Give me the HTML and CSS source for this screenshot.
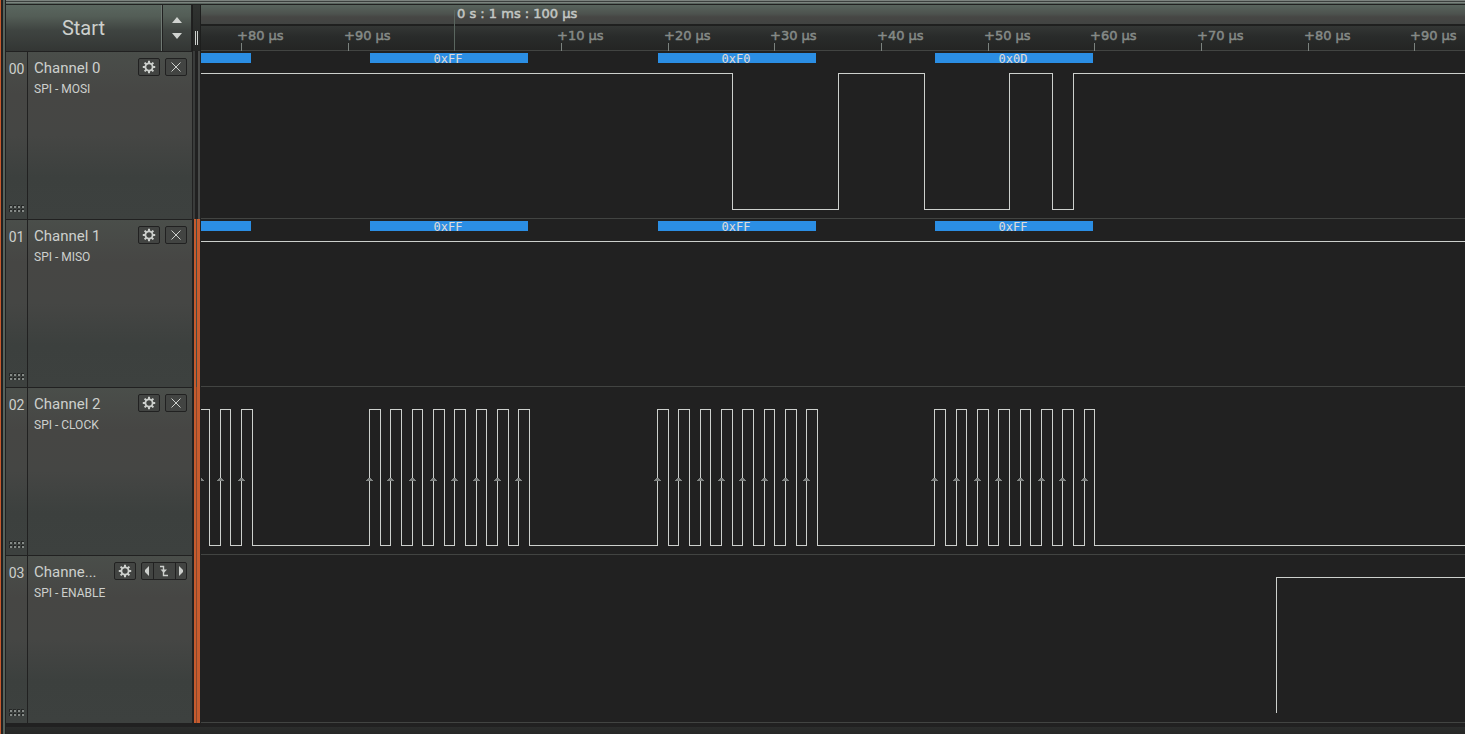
FILE: index.html
```html
<!DOCTYPE html>
<html lang="en">
<head>
<meta charset="utf-8">
<title>Logic Analyzer</title>
<link rel="stylesheet" href="styles.css">
</head>
<body>
<svg class="defs" aria-hidden="true">
  <symbol id="gear" viewBox="0 0 14 14">
    <circle cx="7" cy="7" r="3.6" fill="none" stroke="currentColor" stroke-width="1.8"/>
    <path d="M7 .8v2.4M7 10.8v2.4M.8 7h2.4M10.8 7h2.4M2.6 2.6l1.7 1.7M9.7 9.7l1.7 1.7M2.6 11.4l1.7-1.7M9.7 4.3l1.7-1.7" stroke="currentColor" stroke-width="2" fill="none"/>
  </symbol>
  <symbol id="close" viewBox="0 0 14 14">
    <path d="M2.5 2.5l9 9M11.5 2.5l-9 9" stroke="currentColor" stroke-width="1" fill="none"/>
  </symbol>
  <symbol id="grip" viewBox="0 0 16 8">
    <path d="M0 0h3v3H0zM4 0h3v3H4zM8 0h3v3H8zM12 0h3v3h-3zM0 4h3v3H0zM4 4h3v3H4zM8 4h3v3H8zM12 4h3v3h-3z" fill="#262827"/>
    <path d="M1 1h2v2H1zM5 1h2v2H5zM9 1h2v2H9zM13 1h2v2h-2zM1 5h2v2H1zM5 5h2v2H5zM9 5h2v2H9zM13 5h2v2h-2z" fill="#858a87"/>
  </symbol>
  <symbol id="rise" viewBox="0 0 9 4" overflow="visible">
    <path d="M3 0h3v1h1v1h1v1H1V2h1V1h1z" fill="#808482"/>
  </symbol>
</svg>

<div class="app">
  <div class="edge"></div>
  <main class="window">
    <div class="frame"></div>
    <header class="head">
      <div class="controls">
        <button class="start" type="button">Start</button>
        <button class="spin" type="button" aria-label="Capture settings">
          <svg width="12" height="24" viewBox="0 0 12 24"><path d="M6 1l5 6H1zM6 23l5-6H1z" fill="#d0d3d0"/></svg>
        </button>
      </div>
      <div class="splitter handle"><i></i><i></i></div>
      <div class="timeline">
        <svg class="ruler" height="46">
          <g fill="#5a665f">
            <rect x="253" y="5" width="1" height="41"/>
            <path d="M40 38h1v8h-1zM147 38h1v8h-1zM360 38h1v8h-1zM467 38h1v8h-1zM573 38h1v8h-1zM680 38h1v8h-1zM787 38h1v8h-1zM893 38h1v8h-1zM1000 38h1v8h-1zM1107 38h1v8h-1zM1213 38h1v8h-1z" fill="#7b827e"/>
          </g>
          <text class="major" x="256" y="13">0 s : 1 ms : 100 µs</text>
          <g class="minor">
            <text x="36" y="35">+80 µs</text>
            <text x="143" y="35">+90 µs</text>
            <text x="356" y="35">+10 µs</text>
            <text x="463" y="35">+20 µs</text>
            <text x="569" y="35">+30 µs</text>
            <text x="676" y="35">+40 µs</text>
            <text x="783" y="35">+50 µs</text>
            <text x="889" y="35">+60 µs</text>
            <text x="996" y="35">+70 µs</text>
            <text x="1103" y="35">+80 µs</text>
            <text x="1209" y="35">+90 µs</text>
          </g>
        </svg>
      </div>
    </header>

    <section class="channel">
      <div class="index"><span>00</span><svg width="16" height="8"><use href="#grip"/></svg></div>
      <div class="info">
        <div class="title"><h2>Channel 0</h2>
          <button class="tool" type="button" aria-label="Settings"><svg width="14" height="14"><use href="#gear"/></svg></button>
          <button class="tool" type="button" aria-label="Remove"><svg width="14" height="14"><use href="#close"/></svg></button>
        </div>
        <p>SPI - MOSI</p>
      </div>
      <div class="splitter plain"></div>
      <svg class="plot" height="168">
        <g class="bytes"><path d="M0 2h50v10H0zM169 2h158v10H169zM457 2h158v10H457zM734 2h158v10H734z"/>
          <text x="247" y="12">0xFF</text><text x="535" y="12">0xF0</text><text x="812" y="12">0x0D</text></g>
        <path class="wave" d="M0 22.5H531.5V158.5H637.5V22.5H723.5V158.5H808.5V22.5H851.5V158.5H872.5V22.5H9000"/>
      </svg>
    </section>

    <section class="channel">
      <div class="index"><span>01</span><svg width="16" height="8"><use href="#grip"/></svg></div>
      <div class="info">
        <div class="title"><h2>Channel 1</h2>
          <button class="tool" type="button" aria-label="Settings"><svg width="14" height="14"><use href="#gear"/></svg></button>
          <button class="tool" type="button" aria-label="Remove"><svg width="14" height="14"><use href="#close"/></svg></button>
        </div>
        <p>SPI - MISO</p>
      </div>
      <div class="splitter first"></div>
      <svg class="plot" height="168">
        <g class="bytes"><path d="M0 2h50v10H0zM169 2h158v10H169zM457 2h158v10H457zM734 2h158v10H734z"/>
          <text x="247" y="12">0xFF</text><text x="535" y="12">0xFF</text><text x="812" y="12">0xFF</text></g>
        <path class="wave" d="M0 22.5H9000"/>
      </svg>
    </section>

    <section class="channel">
      <div class="index"><span>02</span><svg width="16" height="8"><use href="#grip"/></svg></div>
      <div class="info">
        <div class="title"><h2>Channel 2</h2>
          <button class="tool" type="button" aria-label="Settings"><svg width="14" height="14"><use href="#gear"/></svg></button>
          <button class="tool" type="button" aria-label="Remove"><svg width="14" height="14"><use href="#close"/></svg></button>
        </div>
        <p>SPI - CLOCK</p>
      </div>
      <div class="splitter"></div>
      <svg class="plot" height="168">
        <path class="wave" d="M0 22.5H8.5V158.5H19.5V22.5H29.5V158.5H40.5V22.5H51.5V158.5
          H168.5V22.5H179.5V158.5H189.5V22.5H200.5V158.5H211.5V22.5H221.5V158.5H232.5V22.5H243.5V158.5H253.5V22.5H264.5V158.5H275.5V22.5H285.5V158.5H296.5V22.5H307.5V158.5H317.5V22.5H328.5V158.5
          H456.5V22.5H467.5V158.5H477.5V22.5H488.5V158.5H499.5V22.5H509.5V158.5H520.5V22.5H531.5V158.5H541.5V22.5H552.5V158.5H563.5V22.5H573.5V158.5H584.5V22.5H595.5V158.5H605.5V22.5H616.5V158.5
          H733.5V22.5H744.5V158.5H755.5V22.5H765.5V158.5H776.5V22.5H787.5V158.5H797.5V22.5H808.5V158.5H819.5V22.5H829.5V158.5H840.5V22.5H851.5V158.5H861.5V22.5H872.5V158.5H883.5V22.5H893.5V158.5H9000"/>
        <g class="edges"></g>
      </svg>
    </section>

    <section class="channel">
      <div class="index"><span>03</span><svg width="16" height="8"><use href="#grip"/></svg></div>
      <div class="info">
        <div class="title"><h2>Channe...</h2>
          <button class="tool" type="button" aria-label="Settings"><svg width="14" height="14"><use href="#gear"/></svg></button>
          <div class="trigger">
            <button type="button" aria-label="Previous edge"><svg width="6" height="10" viewBox="0 0 6 10"><path d="M5 0v10L1 6V4z" fill="currentColor"/></svg></button>
            <button type="button" aria-label="Falling edge trigger"><svg width="10" height="12" viewBox="0 0 10 12"><path d="M1 1.5h3.5v9H9" fill="none" stroke="currentColor" stroke-width="1.4"/><path d="M1.5 4.5h6.5L4.8 8z" fill="currentColor"/></svg></button>
            <button type="button" aria-label="Next edge"><svg width="6" height="10" viewBox="0 0 6 10"><path d="M1 0v10l4-4V4z" fill="currentColor"/></svg></button>
          </div>
        </div>
        <p>SPI - ENABLE</p>
      </div>
      <div class="splitter"></div>
      <svg class="plot" height="168">
        <path class="wave" d="M1075.5 158V22.5H9000"/>
      </svg>
    </section>
    <footer class="foot"></footer>
  </main>
</div>
<script src="edges.js"></script>
</body>
</html>
```
FILE: styles.css
```css
* { box-sizing: border-box; }
body {
  margin: 0;
  background: #212121;
  color: #cdd0cd;
  font-family: Roboto, sans-serif;
}
.defs { position: absolute; width: 0; height: 0; }
button {
  margin: 0;
  padding: 0;
  border: 0;
  color: inherit;
  font: inherit;
  background: none;
}
.app {
  display: grid;
  grid-template-columns: 6px 1fr;
  min-height: 100vh;
  overflow: hidden;
}
.edge {
  background: linear-gradient(90deg, #c65b2e 1px, #212121 1px 3px, #58645d 3px 5px, #212121 5px);
}
.window {
  display: flex;
  flex-direction: column;
  min-width: 0;
  background: #212121;
}
.frame {
  height: 5px;
  background: linear-gradient(#7b827e 1px, #3c403e 1px 2px, #7b827e 2px 3px, #58645d 3px 4px, #212121 4px);
}
.head, .channel {
  display: grid;
}
.head { grid-template-columns: 186px 9px 1fr; }
.channel { grid-template-columns: 22px 164px 9px 1fr; }

.controls {
  display: grid;
  grid-template-columns: 1fr 30px;
}
.start, .spin {
  background: linear-gradient(#5a665f 0, #535d56 25%, #3f4441 55%, #333634 100%);
}
.start { font-size: 20px; border-right: 1px solid #707a74; }
.spin { display: flex; align-items: center; justify-content: center; border: solid #212121; border-width: 0 1px; }

.splitter {
  background: linear-gradient(90deg, #212121 2px, #c65b2e 2px 4px, #85482f 4px 5px, #c65b2e 5px 8px, #212121 8px);
}
.splitter.plain { background: linear-gradient(90deg, #212121 1px, #3a3c3b 1px 3px, #212121 3px 6px, #474948 6px 8px, #212121 8px); }
.splitter.first { background: linear-gradient(90deg, #212121 2px, #c65b2e 2px 4px, #444946 4px 5px, #c65b2e 5px 8px, #212121 8px); }
.splitter.handle {
  display: flex;
  justify-content: center;
  gap: 1px;
  padding-top: 26px;
  background: linear-gradient(#303331, #242524);
  border-left: 1px solid #1d1e1d;
  border-right: 1px solid #1d1e1d;
}
.handle i { width: 1px; height: 14px; background: #cdd0cd; }

.timeline {
  min-width: 0;
  background: linear-gradient(#58645d 0, #4d524e 9px, #464644 12px, #424442 19px, #1f201f 19px 21px, #343735 21px, #292b2a 32px, #242524 45px, #424442 45px);
}
.ruler, .plot { display: block; width: 100%; }
.ruler text { font: 13px "DejaVu Sans", sans-serif; stroke-width: 0.5; }
.major { fill: #c4c7c4; stroke: #c4c7c4; }
.minor { fill: #858a87; stroke: #858a87; }

.index, .info {
  background: linear-gradient(#4a4e4a 0, #464644 25%, #454644 50%, #3c403e 75%, #3d413f 100%);
  border-top: 1px solid #212121;
}
.index {
  display: flex;
  flex-direction: column;
  justify-content: space-between;
  align-items: center;
  padding: 9px 0 6px;
  border-right: 1px solid #212121;
  font-size: 14px;
  line-height: 16px;
}
.info { padding: 6px 5px 0 6px; }
.title { display: flex; align-items: center; gap: 5px; height: 18px; }
.title h2 { flex: 1; margin: 0; padding-top: 2px; font-size: 15px; font-weight: 400; line-height: 18px; white-space: nowrap; }
.info p { margin: 5px 0 0; font-size: 12px; line-height: 16px; }
.tool, .trigger {
  display: flex;
  align-items: center;
  justify-content: center;
  height: 18px;
  border: 1px solid #212121;
  border-radius: 2px;
  background: #424442;
}
.tool { width: 22px; }
.trigger { width: 46px; }
.trigger button { display: flex; align-items: center; justify-content: center; flex: 1; height: 16px; }
.trigger button:nth-child(2) { flex: 2; border: solid #212121; border-width: 0 1px; }

.plot { border-bottom: 1px solid #424442; overflow: hidden; background: #212121; }
.bytes path { fill: #2b8ee4; }
.bytes text { fill: #e0ddd8; font: 12px "DejaVu Sans Mono", monospace; text-anchor: middle; }
.wave { fill: none; stroke: #cdd0cd; stroke-width: 1; shape-rendering: crispEdges; }
.foot { flex: 1; background: linear-gradient(#212121 4px, #2b2d2c 4px, #262726); }
```
FILE: edges.js
```js
// Rising-edge markers on the clock line, in plot pixels.
const rising = [-1, 19, 40, 168, 189, 211, 232, 253, 275, 296, 317,
  456, 477, 499, 520, 541, 563, 584, 605,
  733, 755, 776, 797, 819, 840, 861, 883];
const layer = document.querySelector('.edges');
for (const x of rising) {
  const mark = document.createElementNS('http://www.w3.org/2000/svg', 'use');
  mark.setAttribute('href', '#rise');
  mark.setAttribute('x', x - 4);
  mark.setAttribute('y', 91);
  mark.setAttribute('width', 9);
  mark.setAttribute('height', 4);
  layer.append(mark);
}
```
